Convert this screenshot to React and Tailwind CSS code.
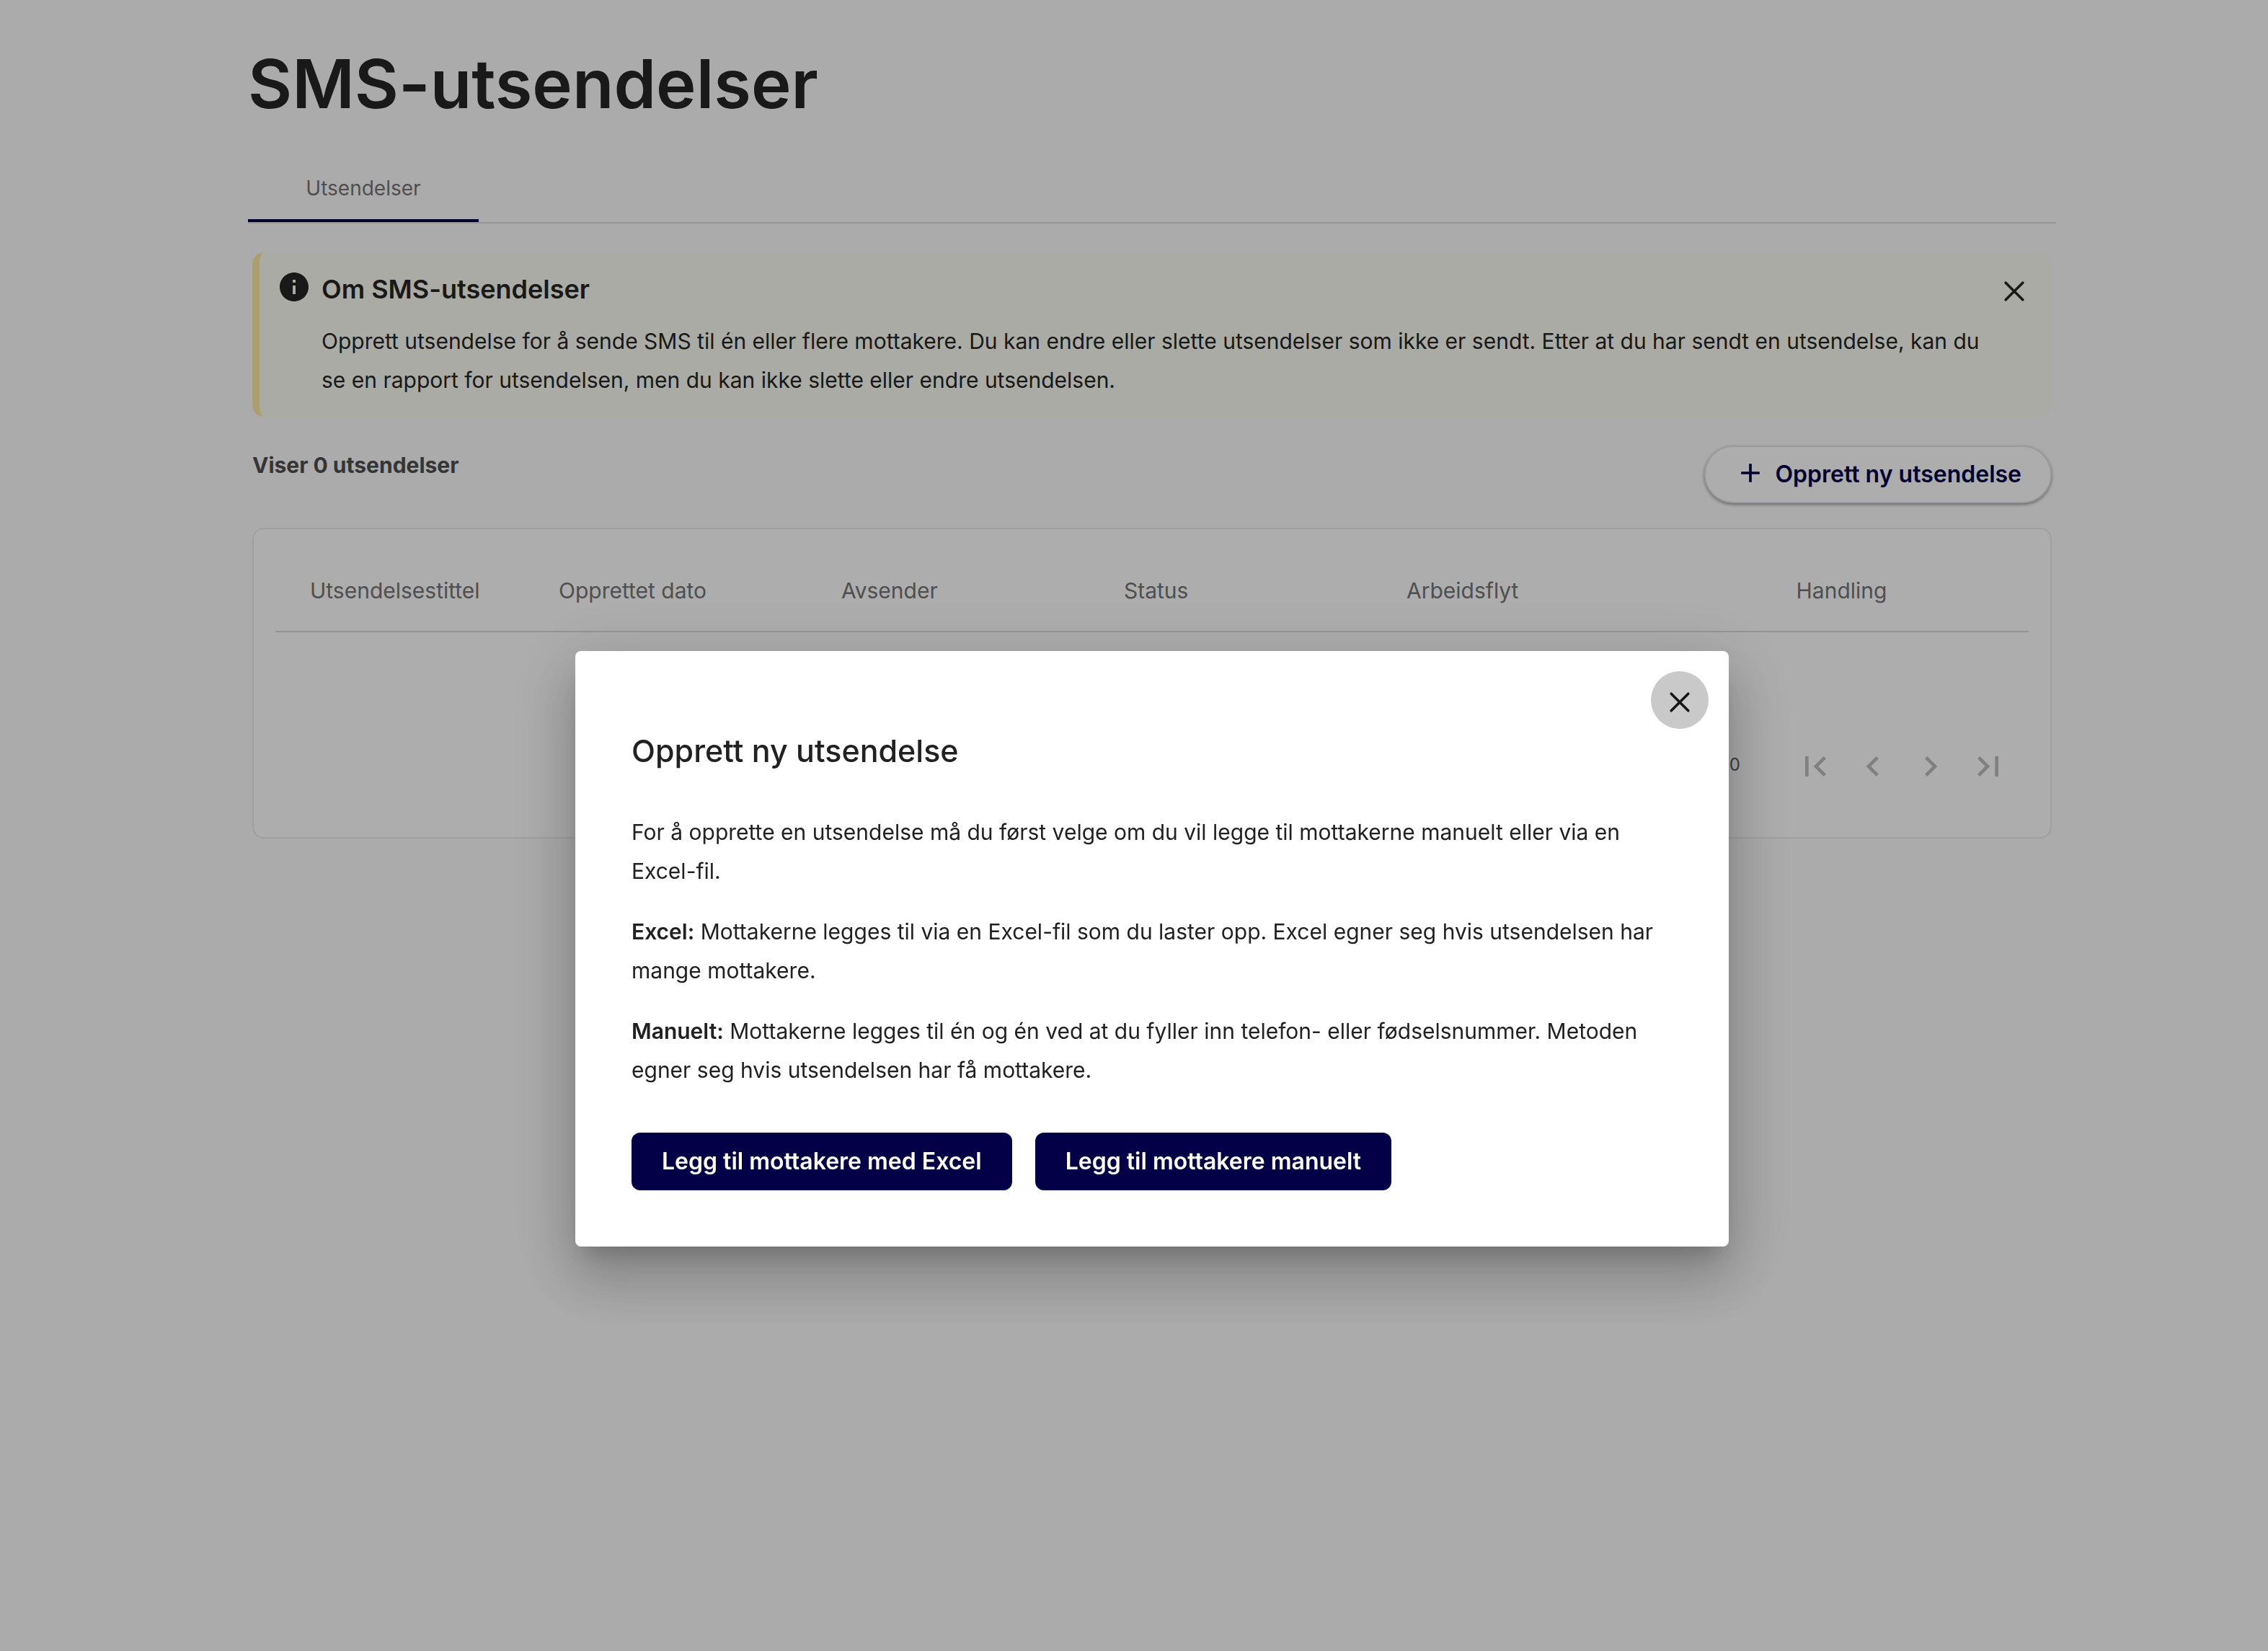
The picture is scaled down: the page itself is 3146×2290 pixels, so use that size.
const PATHS = {
  info: "M12 2C6.48 2 2 6.48 2 12s4.48 10 10 10 10-4.48 10-10S17.52 2 12 2m1 15h-2v-6h2zm0-8h-2V7h2z",
  add: "M19 13h-6v6h-2v-6H5v-2h6V5h2v6h6z",
  first: "M18.41 16.59 13.82 12l4.59-4.59L17 6l-6 6 6 6zM6 6h2v12H6z",
  prev: "M15.41 7.41 14 6l-6 6 6 6 1.41-1.41L10.83 12z",
  next: "M10 6 8.59 7.41 13.17 12l-4.58 4.59L10 18l6-6z",
  last: "M5.59 7.41 10.18 12l-4.59 4.59L7 18l6-6-6-6zM16 6h2v12h-2z",
};

function Icon({ name, className }) {
  return (
    <svg viewBox="0 0 24 24" fill="currentColor" aria-hidden="true" className={className}>
      <path d={PATHS[name]} />
    </svg>
  );
}

function CloseIcon() {
  return (
    <svg
      viewBox="0 0 24 24"
      fill="none"
      stroke="currentColor"
      strokeWidth="1.8"
      strokeLinecap="round"
      aria-hidden="true"
      className="size-12"
    >
      <path d="M6.1 6.1 17.9 17.9M17.9 6.1 6.1 17.9" />
    </svg>
  );
}

function Notice() {
  return (
    <section className="flex items-start rounded-[16px] border-l-[10px] border-[#fdeaa5] bg-[#fcfdf4] py-6 pr-7 pl-6 text-[#252525]">
      <Icon name="info" className="size-12 shrink-0" />
      <div className="ml-[14px] flex-1 pr-5">
        <h2 className="text-[36px] leading-[54px] font-semibold">Om SMS-utsendelser</h2>
        <p className="mt-[18px] text-[30px] leading-[54px]">
          Opprett utsendelse for å sende SMS til én eller flere mottakere. Du kan endre eller slette utsendelser som
          ikke er sendt. Etter at du har sendt en utsendelse, kan du se en rapport for utsendelsen, men du kan ikke
          slette eller endre utsendelsen.
        </p>
      </div>
      <button type="button" aria-label="Lukk melding" className="mt-[6px] shrink-0">
        <CloseIcon />
      </button>
    </section>
  );
}

const COLUMNS = ["Opprettet dato", "Avsender", "Status", "Arbeidsflyt"];
const PAGER = [
  ["first", "Første side"],
  ["prev", "Forrige side"],
  ["next", "Neste side"],
  ["last", "Siste side"],
];

function Dispatches() {
  return (
    <section className="mt-[34px] rounded-[16px] border-2 border-[#ebebeb] bg-white px-[30px] pt-[30px] pb-[58px]">
      <table className="w-full table-fixed border-collapse text-left text-[30px] text-[#757575]">
        <thead>
          <tr className="h-28 border-b-2 border-[#dcdcdc]">
            <th className="w-[361px] pl-12 font-normal">Utsendelsestittel</th>
            {COLUMNS.map((c) => (
              <th key={c} className="w-[392px] pl-8 font-normal">
                {c}
              </th>
            ))}
            <th className="pr-4 text-center font-normal">Handling</th>
          </tr>
        </thead>
      </table>
      <div className="mt-[146px] flex items-center justify-end pr-4">
        <span className="mr-16 mb-1 text-[24px] leading-[36px] text-[#5c5c5c]">0</span>
        {PAGER.map(([icon, label]) => (
          <button key={icon} type="button" disabled aria-label={label} className="p-3 text-[#bdbdbd]">
            <Icon name={icon} className="size-14" />
          </button>
        ))}
      </div>
    </section>
  );
}

function ActionButton({ children }) {
  return (
    <button type="button" className="h-20 rounded-[12px] bg-[#040047] px-[42px] text-[32px] font-semibold text-white">
      {children}
    </button>
  );
}

function CreateDialog() {
  return (
    <div className="fixed inset-0 flex items-center justify-center bg-black/32 pt-[342px] pl-[50px]">
      <div
        role="dialog"
        aria-modal="true"
        aria-labelledby="dialog-title"
        className="relative w-full max-w-[1600px] rounded-[8px] bg-white px-[78px] pt-[106px] pb-[78px] text-[#212121] shadow-[0_22px_30px_-14px_rgba(0,0,0,0.2),0_48px_76px_6px_rgba(0,0,0,0.14),0_18px_92px_16px_rgba(0,0,0,0.12)]"
      >
        <button
          type="button"
          aria-label="Lukk"
          className="absolute top-7 right-7 flex size-20 items-center justify-center rounded-full bg-[#c9c9c9] pt-[6px] text-[#171717]"
        >
          <CloseIcon />
        </button>
        <h2 id="dialog-title" className="text-[43px] leading-[64px] font-medium">
          Opprett ny utsendelse
        </h2>
        <div className="mt-[54px] flex flex-col gap-[30px] text-[30px] leading-[54px]">
          <p>
            For å opprette en utsendelse må du først velge om du vil legge til mottakerne manuelt eller via en
            Excel-fil.
          </p>
          <p>
            <strong className="font-semibold">Excel:</strong> Mottakerne legges til via en Excel-fil som du laster opp.
            Excel egner seg hvis utsendelsen har mange mottakere.
          </p>
          <p>
            <strong className="font-semibold">Manuelt:</strong> Mottakerne legges til én og én ved at du fyller inn
            telefon- eller fødselsnummer. Metoden egner seg hvis utsendelsen har få mottakere.
          </p>
        </div>
        <div className="mt-[60px] flex gap-8">
          <ActionButton>Legg til mottakere med Excel</ActionButton>
          <ActionButton>Legg til mottakere manuelt</ActionButton>
        </div>
      </div>
    </div>
  );
}

export default function App() {
  return (
    <div className="min-h-screen bg-[#fcfcfc] font-[Inter,sans-serif]">
      <main className="pt-14 pr-[294px] pl-[344px]">
        <h1 className="text-[94px] leading-[120px] font-semibold text-[#252525]">SMS-utsendelser</h1>
        <div role="tablist" className="mt-[36px] flex border-b-2 border-[#dcdcdc]">
          <button
            type="button"
            role="tab"
            aria-selected="true"
            className="h-24 w-80 border-b-4 border-[#040047] pt-[6px] text-[28px] text-[#757575]"
          >
            Utsendelser
          </button>
        </div>
        <div className="px-[6px] pt-10">
          <Notice />
          <div className="mt-10 flex items-start justify-between">
            <p className="text-[30px] leading-[54px] font-bold text-[#4f4f4f]">Viser 0 utsendelser</p>
            <button
              type="button"
              className="flex h-20 items-center gap-3 rounded-full border-2 border-[#e4e4ec] bg-white px-10 text-[32px] font-semibold text-[#040047] shadow-[0_2px_4px_rgba(0,0,0,0.4)]"
            >
              <Icon name="add" className="mb-1 size-11" />
              Opprett ny utsendelse
            </button>
          </div>
          <Dispatches />
        </div>
      </main>
      <CreateDialog />
    </div>
  );
}
